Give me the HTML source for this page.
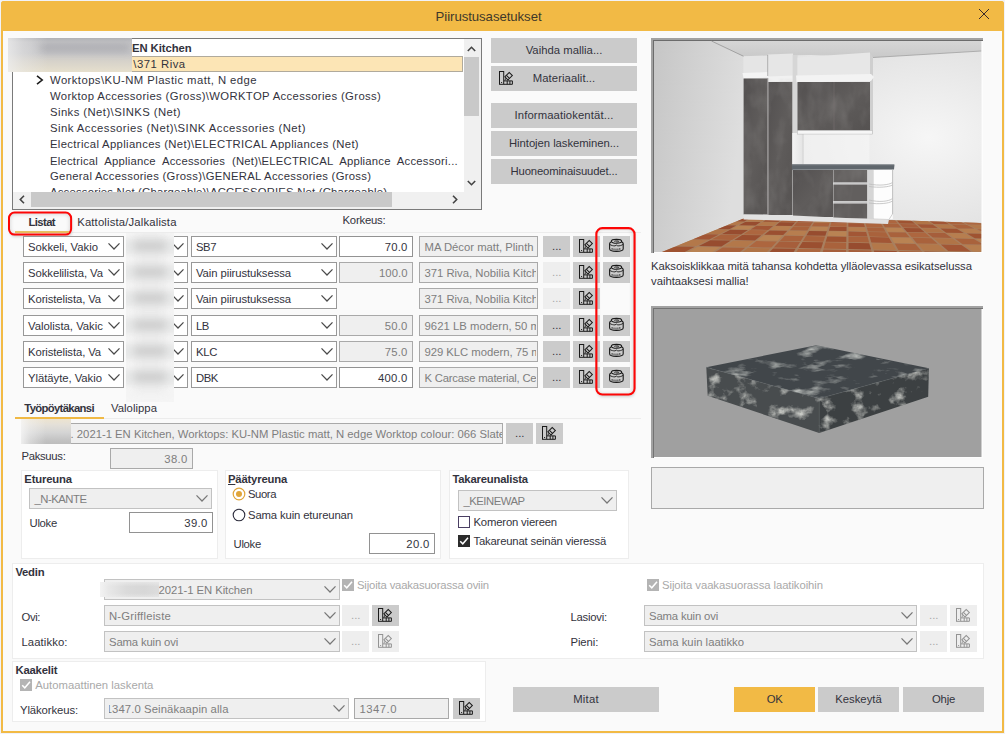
<!DOCTYPE html>
<html lang="fi">
<head>
<meta charset="utf-8">
<title>Piirustusasetukset</title>
<style>
html,body{margin:0;padding:0;}
body{width:1005px;height:734px;overflow:hidden;background:#f1f2f8;font-family:"Liberation Sans", sans-serif;position:relative;}
.a{position:absolute;box-sizing:border-box;}
.t{position:absolute;white-space:pre;}
svg{position:absolute;overflow:visible;}
</style>
</head>
<body>
<div class="a" style="left:1px;top:1px;width:1003px;height:732px;background:#fafafa;border:2px solid #f2ba45;border-radius:3px 3px 0 0;"></div>
<div class="a" style="left:1px;top:1px;width:1003px;height:30px;background:#f2ba45;border-radius:3px 3px 0 0;"></div>
<span class="t" style="top:9px;font-size:13.2px;line-height:15px;color:#40382a;left:435.6px;letter-spacing:-0.06px;">Piirustusasetukset</span>
<svg style="left:978px;top:8px" width="12" height="12" viewBox="0 0 12 12"><path d="M1 1 L11 11 M11 1 L1 11" stroke="#3a2a2a" stroke-width="1" fill="none"/></svg>
<div class="a" style="left:12px;top:38px;width:470px;height:172px;background:#ffffff;border:1px solid #7a7a7a;"></div>
<div class="a" style="left:132px;top:56px;width:331px;height:16px;background:#fce5b5;border:1px solid #b0aa9c;border-left:none;"></div>
<span class="t" style="top:42px;font-size:11.3px;line-height:12px;color:#33333d;font-weight:700;left:132px;letter-spacing:-0.07px;">EN Kitchen</span>
<span class="t" style="top:58px;font-size:11.3px;line-height:12px;color:#33333d;left:133.3px;letter-spacing:0.51px;">\371 Riva</span>
<span class="t" style="top:74px;font-size:11.3px;line-height:12px;color:#33333d;left:50px;letter-spacing:0.43px;">Worktops\KU-NM Plastic matt, N edge</span>
<span class="t" style="top:90px;font-size:11.3px;line-height:12px;color:#33333d;left:50px;letter-spacing:0.36px;">Worktop Accessories (Gross)\WORKTOP Accessories (Gross)</span>
<span class="t" style="top:106px;font-size:11.3px;line-height:12px;color:#33333d;left:50px;letter-spacing:0.43px;">Sinks (Net)\SINKS (Net)</span>
<span class="t" style="top:122px;font-size:11.3px;line-height:12px;color:#33333d;left:50px;letter-spacing:0.47px;">Sink Accessories (Net)\SINK Accessories (Net)</span>
<span class="t" style="top:138px;font-size:11.3px;line-height:12px;color:#33333d;left:50px;letter-spacing:0.34px;">Electrical Appliances (Net)\ELECTRICAL Appliances (Net)</span>
<span class="t" style="top:155px;font-size:11.3px;line-height:12px;color:#33333d;left:50px;word-spacing:3.4px;letter-spacing:0.22px;">Electrical Appliance Accessories (Net)\ELECTRICAL Appliance Accessori...</span>
<span class="t" style="top:170px;font-size:11.3px;line-height:12px;color:#33333d;left:50px;letter-spacing:0.29px;">General Accessories (Gross)\GENERAL Accessories (Gross)</span>
<div class="a" style="left:13px;top:184px;width:451px;height:8px;overflow:hidden;">
<span class="t" style="top:2px;font-size:11.3px;line-height:12px;color:#33333d;left:37px;letter-spacing:0.21px;">Accessories Net (Chargeable)\ACCESSORIES Net (Chargeable)</span>
</div>
<svg style="left:36px;top:75px" width="8" height="10" viewBox="0 0 8 10"><path d="M1 0.8 L6.2 5 L1 9.2" stroke="#1c1c1c" stroke-width="1.6" fill="none"/></svg>
<div class="a" style="left:464px;top:39px;width:17px;height:153px;background:#f0f0f0;"></div>
<div class="a" style="left:464px;top:57px;width:15px;height:58.5px;background:#c9c9c9;"></div>
<svg style="left:467px;top:46px" width="9" height="6" viewBox="0 0 9 6"><path d="M0.8 5 L4.5 1.3 L8.2 5" stroke="#444" stroke-width="1.6" fill="none"/></svg>
<svg style="left:467px;top:180px" width="9" height="6" viewBox="0 0 9 6"><path d="M0.8 1 L4.5 4.7 L8.2 1" stroke="#444" stroke-width="1.6" fill="none"/></svg>
<div class="a" style="left:13px;top:192px;width:451px;height:17px;background:#f0f0f0;"></div>
<div class="a" style="left:464px;top:192px;width:17px;height:17px;background:#f0f0f0;"></div>
<div class="a" style="left:31px;top:192px;width:361px;height:15.3px;background:#c9c9c9;"></div>
<svg style="left:19px;top:195px" width="6" height="9" viewBox="0 0 6 9"><path d="M5 0.8 L1.3 4.5 L5 8.2" stroke="#444" stroke-width="1.6" fill="none"/></svg>
<svg style="left:452px;top:195px" width="6" height="9" viewBox="0 0 6 9"><path d="M1 0.8 L4.7 4.5 L1 8.2" stroke="#444" stroke-width="1.6" fill="none"/></svg>
<div class="a" style="left:8px;top:38px;width:124px;height:34px;overflow:hidden;background:linear-gradient(180deg,#b2b3b7 0%,#c2c2c5 12%,#c6c6c8 45%,#d6d2ca 68%,#e6dfcd 100%);"><div class="a" style="left:30px;top:6px;width:92px;height:8px;border-radius:4px;background:rgba(90,90,100,0.2);filter:blur(3.5px);"></div><div class="a" style="left:0;top:0;width:124px;height:34px;background:linear-gradient(90deg,rgba(240,240,240,0.75) 0%,rgba(238,238,238,0.4) 12%,rgba(236,236,236,0) 32%);"></div></div>
<div class="a" style="left:491px;top:38px;width:146px;height:25px;background:#cbcbcb;"></div>
<span class="t" style="top:44px;font-size:11.3px;line-height:12px;color:#33333d;left:525.65px;letter-spacing:0.02px;">Vaihda mallia...</span>
<div class="a" style="left:491px;top:66px;width:146px;height:25px;background:#cbcbcb;"></div>
<span class="t" style="top:72px;font-size:11.3px;line-height:12px;color:#33333d;left:532.75px;letter-spacing:0.07px;">Materiaalit...</span>
<svg style="left:499px;top:71px;opacity:1" width="14" height="14" viewBox="0 0 14 14" fill="none" stroke="#1a1a1a" stroke-width="1"><rect x="0.5" y="0.5" width="4.2" height="12.8"/><rect x="2.1" y="11" width="1" height="1" fill="#1a1a1a" stroke="none"/><g transform="translate(9.6 5.2) rotate(-45)"><rect x="-3.1" y="-2.2" width="6.2" height="4.4"/><path d="M-0.9 -2.2 V2.2"/></g><path d="M6.6 7.4 L6 9.4" stroke-width="0.9"/><path d="M5 9.9 H13.4 V13.3 H5 M8.2 9.9 V13.3 M10.9 9.9 V13.3"/></svg>
<div class="a" style="left:491px;top:103px;width:146px;height:25px;background:#cbcbcb;"></div>
<span class="t" style="top:109px;font-size:11.3px;line-height:12px;color:#33333d;left:514.5px;letter-spacing:0.11px;">Informaatiokentät...</span>
<div class="a" style="left:491px;top:131px;width:146px;height:25px;background:#cbcbcb;"></div>
<span class="t" style="top:137px;font-size:11.3px;line-height:12px;color:#33333d;left:509.0px;letter-spacing:-0.05px;">Hintojen laskeminen...</span>
<div class="a" style="left:491px;top:159px;width:146px;height:25px;background:#cbcbcb;"></div>
<span class="t" style="top:165px;font-size:11.3px;line-height:12px;color:#33333d;left:510.5px;letter-spacing:-0.15px;">Huoneominaisuudet...</span>
<div class="a" style="left:15px;top:232px;width:626px;height:1px;background:#ececec;"></div>
<span class="t" style="top:216px;font-size:11.3px;line-height:12px;color:#33333d;font-weight:700;left:28.5px;letter-spacing:-0.61px;">Listat</span>
<span class="t" style="top:216px;font-size:11.3px;line-height:12px;color:#33333d;left:77.2px;letter-spacing:0.16px;">Kattolista/Jalkalista</span>
<span class="t" style="top:214px;font-size:11.3px;line-height:12px;color:#33333d;left:342.5px;letter-spacing:-0.2px;">Korkeus:</span>
<div class="a" style="left:9px;top:213px;width:62px;height:22px;border-radius:5.5px;box-shadow:1px 2px 3px rgba(0,0,0,0.16), inset 0 0 4px 1px rgba(0,0,0,0.17);"></div>
<svg style="left:0;top:0" width="1005" height="734" viewBox="0 0 1005 734"><rect x="9.0" y="212.6" width="62.099999999999994" height="22.0" rx="5.5" ry="5.5" fill="none" stroke="#fd0606" stroke-width="2.0"/></svg>
<div class="a" style="left:14.5px;top:231.2px;width:54px;height:1.9px;background:#e6b548;opacity:0.85;"></div>
<div class="a" style="left:23px;top:236px;width:101px;height:21px;background:#fff;border:1px solid #989898;"></div>
<div class="a" style="left:28px;top:237px;width:76px;height:19px;overflow:hidden;"></div>
<span class="t" style="top:241px;font-size:11.3px;line-height:12px;color:#33333d;left:28px;letter-spacing:-0.01px;">Sokkeli, Vakio</span>
<div class="a" style="left:104px;top:237px;width:19px;height:19px;background:#fff;"></div>
<svg style="left:107.9px;top:243.0px" width="12" height="6.8" viewBox="0 0 12 6.8"><path d="M0.5 0.4 L6.0 6.0 L11.5 0.4" stroke="#4a4a4a" stroke-width="1.25" fill="none"/></svg>
<div class="a" style="left:128px;top:236px;width:60px;height:21px;background:#fff;border:1px solid #989898;"></div>
<svg style="left:171.9px;top:243.0px" width="12" height="6.8" viewBox="0 0 12 6.8"><path d="M0.5 0.4 L6.0 6.0 L11.5 0.4" stroke="#4a4a4a" stroke-width="1.25" fill="none"/></svg>
<div class="a" style="left:191px;top:236px;width:146px;height:21px;background:#ffffff;border:1px solid #989898;"></div>
<span class="t" style="top:241px;font-size:11.3px;line-height:12px;color:#33333d;left:196px;letter-spacing:-0.45px;">SB7</span>
<svg style="left:320.9px;top:243.0px" width="12" height="6.8" viewBox="0 0 12 6.8"><path d="M0.5 0.4 L6.0 6.0 L11.5 0.4" stroke="#4a4a4a" stroke-width="1.25" fill="none"/></svg>
<div class="a" style="left:339px;top:236px;width:74px;height:21px;background:#ffffff;border:1px solid #929292;"></div>
<span class="t" style="top:241px;font-size:11.3px;line-height:12px;color:#33333d;right:597.5px;letter-spacing:0.2px;">70.0</span>
<div class="a" style="left:419px;top:236px;width:119px;height:21px;background:#efefef;border:1px solid #a9a9a9;"></div>
<div class="a" style="left:420px;top:237px;width:116.3px;height:19px;overflow:hidden;">
<span class="t" style="top:4px;font-size:11.3px;line-height:12px;color:#7e7e7e;left:4.5px;letter-spacing:-0.01px;">MA Décor matt, Plinth</span>
</div>
<div class="a" style="left:543px;top:236px;width:27px;height:21px;background:#cbcbcb;"></div>
<span class="t" style="top:240px;font-size:11.3px;line-height:12px;color:#33333d;left:552px;letter-spacing:0.03px;">...</span>
<div class="a" style="left:573px;top:236px;width:27px;height:21px;background:#cbcbcb;"></div>
<svg style="left:579px;top:239px;opacity:1" width="14" height="14" viewBox="0 0 14 14" fill="none" stroke="#1a1a1a" stroke-width="1"><rect x="0.5" y="0.5" width="4.2" height="12.8"/><rect x="2.1" y="11" width="1" height="1" fill="#1a1a1a" stroke="none"/><g transform="translate(9.6 5.2) rotate(-45)"><rect x="-3.1" y="-2.2" width="6.2" height="4.4"/><path d="M-0.9 -2.2 V2.2"/></g><path d="M6.6 7.4 L6 9.4" stroke-width="0.9"/><path d="M5 9.9 H13.4 V13.3 H5 M8.2 9.9 V13.3 M10.9 9.9 V13.3"/></svg>
<div class="a" style="left:603px;top:236px;width:27px;height:21px;background:#cbcbcb;"></div>
<svg style="left:609px;top:239px" width="15" height="13" viewBox="0 0 15 13" fill="none" stroke="#1a1a1a" stroke-width="1.1"><ellipse cx="7.5" cy="2.3" rx="5.2" ry="1.9"/><path d="M5.2 2.6 C5.4 1.6 9.6 1.6 9.8 2.4 C9.8 3.1 7.6 3.1 6.8 2.8" stroke-width="0.8"/><path d="M2.5 2.7 C1.2 3.1 0.6 3.8 0.6 4.8 V9.8 C0.6 11.3 3.6 12.4 7.4 12.4 C11.2 12.4 14.2 11.3 14.2 9.8 V4.8 C14.2 3.8 13.6 3.1 12.5 2.7"/><path d="M0.6 5.3 C2.4 6.6 4.4 6.9 6 6.9 L7.4 6.1 L8.8 6.9 C10.4 6.9 12.4 6.6 14.2 5.3" stroke-width="0.9"/><path d="M3.1 9 V10.9 M5 9.5 V11.4 M7 9.6 V11.5 M8.9 9.5 V11.4 M10.8 9 V10.9" stroke-width="0.8"/></svg>
<div class="a" style="left:23px;top:262px;width:101px;height:21px;background:#fff;border:1px solid #989898;"></div>
<div class="a" style="left:28px;top:263px;width:76px;height:19px;overflow:hidden;"></div>
<span class="t" style="top:267px;font-size:11.3px;line-height:12px;color:#33333d;left:28px;letter-spacing:-0.05px;">Sokkelilista, Va</span>
<div class="a" style="left:104px;top:263px;width:19px;height:19px;background:#fff;"></div>
<svg style="left:107.9px;top:269.0px" width="12" height="6.8" viewBox="0 0 12 6.8"><path d="M0.5 0.4 L6.0 6.0 L11.5 0.4" stroke="#4a4a4a" stroke-width="1.25" fill="none"/></svg>
<div class="a" style="left:128px;top:262px;width:60px;height:21px;background:#fff;border:1px solid #989898;"></div>
<svg style="left:171.9px;top:269.0px" width="12" height="6.8" viewBox="0 0 12 6.8"><path d="M0.5 0.4 L6.0 6.0 L11.5 0.4" stroke="#4a4a4a" stroke-width="1.25" fill="none"/></svg>
<div class="a" style="left:191px;top:262px;width:146px;height:21px;background:#ffffff;border:1px solid #989898;"></div>
<span class="t" style="top:267px;font-size:11.3px;line-height:12px;color:#33333d;left:196px;letter-spacing:-0.08px;">Vain piirustuksessa</span>
<svg style="left:320.9px;top:269.0px" width="12" height="6.8" viewBox="0 0 12 6.8"><path d="M0.5 0.4 L6.0 6.0 L11.5 0.4" stroke="#4a4a4a" stroke-width="1.25" fill="none"/></svg>
<div class="a" style="left:339px;top:262px;width:74px;height:21px;background:#efefef;border:1px solid #a9a9a9;"></div>
<span class="t" style="top:267px;font-size:11.3px;line-height:12px;color:#7e7e7e;right:597.5px;letter-spacing:0.04px;">100.0</span>
<div class="a" style="left:419px;top:262px;width:119px;height:21px;background:#efefef;border:1px solid #a9a9a9;"></div>
<div class="a" style="left:420px;top:263px;width:116.3px;height:19px;overflow:hidden;">
<span class="t" style="top:4px;font-size:11.3px;line-height:12px;color:#7e7e7e;left:4.5px;letter-spacing:-0.01px;">371 Riva, Nobilia Kitchen</span>
</div>
<div class="a" style="left:543px;top:262px;width:27px;height:21px;background:#eeeeee;"></div>
<span class="t" style="top:266px;font-size:11.3px;line-height:12px;color:#a8a8a8;left:552px;letter-spacing:0.03px;">...</span>
<div class="a" style="left:573px;top:262px;width:27px;height:21px;background:#cbcbcb;"></div>
<svg style="left:579px;top:265px;opacity:1" width="14" height="14" viewBox="0 0 14 14" fill="none" stroke="#1a1a1a" stroke-width="1"><rect x="0.5" y="0.5" width="4.2" height="12.8"/><rect x="2.1" y="11" width="1" height="1" fill="#1a1a1a" stroke="none"/><g transform="translate(9.6 5.2) rotate(-45)"><rect x="-3.1" y="-2.2" width="6.2" height="4.4"/><path d="M-0.9 -2.2 V2.2"/></g><path d="M6.6 7.4 L6 9.4" stroke-width="0.9"/><path d="M5 9.9 H13.4 V13.3 H5 M8.2 9.9 V13.3 M10.9 9.9 V13.3"/></svg>
<div class="a" style="left:603px;top:262px;width:27px;height:21px;background:#cbcbcb;"></div>
<svg style="left:609px;top:265px" width="15" height="13" viewBox="0 0 15 13" fill="none" stroke="#1a1a1a" stroke-width="1.1"><ellipse cx="7.5" cy="2.3" rx="5.2" ry="1.9"/><path d="M5.2 2.6 C5.4 1.6 9.6 1.6 9.8 2.4 C9.8 3.1 7.6 3.1 6.8 2.8" stroke-width="0.8"/><path d="M2.5 2.7 C1.2 3.1 0.6 3.8 0.6 4.8 V9.8 C0.6 11.3 3.6 12.4 7.4 12.4 C11.2 12.4 14.2 11.3 14.2 9.8 V4.8 C14.2 3.8 13.6 3.1 12.5 2.7"/><path d="M0.6 5.3 C2.4 6.6 4.4 6.9 6 6.9 L7.4 6.1 L8.8 6.9 C10.4 6.9 12.4 6.6 14.2 5.3" stroke-width="0.9"/><path d="M3.1 9 V10.9 M5 9.5 V11.4 M7 9.6 V11.5 M8.9 9.5 V11.4 M10.8 9 V10.9" stroke-width="0.8"/></svg>
<div class="a" style="left:23px;top:288px;width:101px;height:21px;background:#fff;border:1px solid #989898;"></div>
<div class="a" style="left:28px;top:289px;width:76px;height:19px;overflow:hidden;"></div>
<span class="t" style="top:293px;font-size:11.3px;line-height:12px;color:#33333d;left:28px;letter-spacing:-0.09px;">Koristelista, Va</span>
<div class="a" style="left:104px;top:289px;width:19px;height:19px;background:#fff;"></div>
<svg style="left:107.9px;top:295.0px" width="12" height="6.8" viewBox="0 0 12 6.8"><path d="M0.5 0.4 L6.0 6.0 L11.5 0.4" stroke="#4a4a4a" stroke-width="1.25" fill="none"/></svg>
<div class="a" style="left:128px;top:288px;width:60px;height:21px;background:#fff;border:1px solid #989898;"></div>
<svg style="left:171.9px;top:295.0px" width="12" height="6.8" viewBox="0 0 12 6.8"><path d="M0.5 0.4 L6.0 6.0 L11.5 0.4" stroke="#4a4a4a" stroke-width="1.25" fill="none"/></svg>
<div class="a" style="left:191px;top:288px;width:146px;height:21px;background:#ffffff;border:1px solid #989898;"></div>
<span class="t" style="top:293px;font-size:11.3px;line-height:12px;color:#33333d;left:196px;letter-spacing:-0.08px;">Vain piirustuksessa</span>
<svg style="left:320.9px;top:295.0px" width="12" height="6.8" viewBox="0 0 12 6.8"><path d="M0.5 0.4 L6.0 6.0 L11.5 0.4" stroke="#4a4a4a" stroke-width="1.25" fill="none"/></svg>
<div class="a" style="left:419px;top:288px;width:119px;height:21px;background:#efefef;border:1px solid #a9a9a9;"></div>
<div class="a" style="left:420px;top:289px;width:116.3px;height:19px;overflow:hidden;">
<span class="t" style="top:4px;font-size:11.3px;line-height:12px;color:#7e7e7e;left:4.5px;letter-spacing:-0.01px;">371 Riva, Nobilia Kitchen</span>
</div>
<div class="a" style="left:543px;top:288px;width:27px;height:21px;background:#eeeeee;"></div>
<span class="t" style="top:292px;font-size:11.3px;line-height:12px;color:#a8a8a8;left:552px;letter-spacing:0.03px;">...</span>
<div class="a" style="left:573px;top:288px;width:27px;height:21px;background:#cbcbcb;"></div>
<svg style="left:579px;top:291px;opacity:1" width="14" height="14" viewBox="0 0 14 14" fill="none" stroke="#1a1a1a" stroke-width="1"><rect x="0.5" y="0.5" width="4.2" height="12.8"/><rect x="2.1" y="11" width="1" height="1" fill="#1a1a1a" stroke="none"/><g transform="translate(9.6 5.2) rotate(-45)"><rect x="-3.1" y="-2.2" width="6.2" height="4.4"/><path d="M-0.9 -2.2 V2.2"/></g><path d="M6.6 7.4 L6 9.4" stroke-width="0.9"/><path d="M5 9.9 H13.4 V13.3 H5 M8.2 9.9 V13.3 M10.9 9.9 V13.3"/></svg>
<div class="a" style="left:23px;top:315px;width:101px;height:21px;background:#fff;border:1px solid #989898;"></div>
<div class="a" style="left:28px;top:316px;width:76px;height:19px;overflow:hidden;"></div>
<span class="t" style="top:320px;font-size:11.3px;line-height:12px;color:#33333d;left:28px;">Valolista, Vakic</span>
<div class="a" style="left:104px;top:316px;width:19px;height:19px;background:#fff;"></div>
<svg style="left:107.9px;top:322.0px" width="12" height="6.8" viewBox="0 0 12 6.8"><path d="M0.5 0.4 L6.0 6.0 L11.5 0.4" stroke="#4a4a4a" stroke-width="1.25" fill="none"/></svg>
<div class="a" style="left:128px;top:315px;width:60px;height:21px;background:#fff;border:1px solid #989898;"></div>
<svg style="left:171.9px;top:322.0px" width="12" height="6.8" viewBox="0 0 12 6.8"><path d="M0.5 0.4 L6.0 6.0 L11.5 0.4" stroke="#4a4a4a" stroke-width="1.25" fill="none"/></svg>
<div class="a" style="left:191px;top:315px;width:146px;height:21px;background:#ffffff;border:1px solid #989898;"></div>
<span class="t" style="top:320px;font-size:11.3px;line-height:12px;color:#33333d;left:196px;letter-spacing:-0.41px;">LB</span>
<svg style="left:320.9px;top:322.0px" width="12" height="6.8" viewBox="0 0 12 6.8"><path d="M0.5 0.4 L6.0 6.0 L11.5 0.4" stroke="#4a4a4a" stroke-width="1.25" fill="none"/></svg>
<div class="a" style="left:339px;top:315px;width:74px;height:21px;background:#efefef;border:1px solid #a9a9a9;"></div>
<span class="t" style="top:320px;font-size:11.3px;line-height:12px;color:#7e7e7e;right:597.5px;letter-spacing:0.2px;">50.0</span>
<div class="a" style="left:419px;top:315px;width:119px;height:21px;background:#efefef;border:1px solid #a9a9a9;"></div>
<div class="a" style="left:420px;top:316px;width:116.3px;height:19px;overflow:hidden;">
<span class="t" style="top:4px;font-size:11.3px;line-height:12px;color:#7e7e7e;left:4.5px;letter-spacing:0.03px;">9621 LB modern, 50 mm</span>
</div>
<div class="a" style="left:543px;top:315px;width:27px;height:21px;background:#cbcbcb;"></div>
<span class="t" style="top:319px;font-size:11.3px;line-height:12px;color:#33333d;left:552px;letter-spacing:0.03px;">...</span>
<div class="a" style="left:573px;top:315px;width:27px;height:21px;background:#cbcbcb;"></div>
<svg style="left:579px;top:318px;opacity:1" width="14" height="14" viewBox="0 0 14 14" fill="none" stroke="#1a1a1a" stroke-width="1"><rect x="0.5" y="0.5" width="4.2" height="12.8"/><rect x="2.1" y="11" width="1" height="1" fill="#1a1a1a" stroke="none"/><g transform="translate(9.6 5.2) rotate(-45)"><rect x="-3.1" y="-2.2" width="6.2" height="4.4"/><path d="M-0.9 -2.2 V2.2"/></g><path d="M6.6 7.4 L6 9.4" stroke-width="0.9"/><path d="M5 9.9 H13.4 V13.3 H5 M8.2 9.9 V13.3 M10.9 9.9 V13.3"/></svg>
<div class="a" style="left:603px;top:315px;width:27px;height:21px;background:#cbcbcb;"></div>
<svg style="left:609px;top:318px" width="15" height="13" viewBox="0 0 15 13" fill="none" stroke="#1a1a1a" stroke-width="1.1"><ellipse cx="7.5" cy="2.3" rx="5.2" ry="1.9"/><path d="M5.2 2.6 C5.4 1.6 9.6 1.6 9.8 2.4 C9.8 3.1 7.6 3.1 6.8 2.8" stroke-width="0.8"/><path d="M2.5 2.7 C1.2 3.1 0.6 3.8 0.6 4.8 V9.8 C0.6 11.3 3.6 12.4 7.4 12.4 C11.2 12.4 14.2 11.3 14.2 9.8 V4.8 C14.2 3.8 13.6 3.1 12.5 2.7"/><path d="M0.6 5.3 C2.4 6.6 4.4 6.9 6 6.9 L7.4 6.1 L8.8 6.9 C10.4 6.9 12.4 6.6 14.2 5.3" stroke-width="0.9"/><path d="M3.1 9 V10.9 M5 9.5 V11.4 M7 9.6 V11.5 M8.9 9.5 V11.4 M10.8 9 V10.9" stroke-width="0.8"/></svg>
<div class="a" style="left:23px;top:341px;width:101px;height:21px;background:#fff;border:1px solid #989898;"></div>
<div class="a" style="left:28px;top:342px;width:76px;height:19px;overflow:hidden;"></div>
<span class="t" style="top:346px;font-size:11.3px;line-height:12px;color:#33333d;left:28px;letter-spacing:-0.09px;">Koristelista, Va</span>
<div class="a" style="left:104px;top:342px;width:19px;height:19px;background:#fff;"></div>
<svg style="left:107.9px;top:348.0px" width="12" height="6.8" viewBox="0 0 12 6.8"><path d="M0.5 0.4 L6.0 6.0 L11.5 0.4" stroke="#4a4a4a" stroke-width="1.25" fill="none"/></svg>
<div class="a" style="left:128px;top:341px;width:60px;height:21px;background:#fff;border:1px solid #989898;"></div>
<svg style="left:171.9px;top:348.0px" width="12" height="6.8" viewBox="0 0 12 6.8"><path d="M0.5 0.4 L6.0 6.0 L11.5 0.4" stroke="#4a4a4a" stroke-width="1.25" fill="none"/></svg>
<div class="a" style="left:191px;top:341px;width:146px;height:21px;background:#ffffff;border:1px solid #989898;"></div>
<span class="t" style="top:346px;font-size:11.3px;line-height:12px;color:#33333d;left:196px;letter-spacing:-0.33px;">KLC</span>
<svg style="left:320.9px;top:348.0px" width="12" height="6.8" viewBox="0 0 12 6.8"><path d="M0.5 0.4 L6.0 6.0 L11.5 0.4" stroke="#4a4a4a" stroke-width="1.25" fill="none"/></svg>
<div class="a" style="left:339px;top:341px;width:74px;height:21px;background:#efefef;border:1px solid #a9a9a9;"></div>
<span class="t" style="top:346px;font-size:11.3px;line-height:12px;color:#7e7e7e;right:597.5px;letter-spacing:0.2px;">75.0</span>
<div class="a" style="left:419px;top:341px;width:119px;height:21px;background:#efefef;border:1px solid #a9a9a9;"></div>
<div class="a" style="left:420px;top:342px;width:116.3px;height:19px;overflow:hidden;">
<span class="t" style="top:4px;font-size:11.3px;line-height:12px;color:#7e7e7e;left:4.5px;letter-spacing:-0.03px;">929 KLC modern, 75 mm</span>
</div>
<div class="a" style="left:543px;top:341px;width:27px;height:21px;background:#cbcbcb;"></div>
<span class="t" style="top:345px;font-size:11.3px;line-height:12px;color:#33333d;left:552px;letter-spacing:0.03px;">...</span>
<div class="a" style="left:573px;top:341px;width:27px;height:21px;background:#cbcbcb;"></div>
<svg style="left:579px;top:344px;opacity:1" width="14" height="14" viewBox="0 0 14 14" fill="none" stroke="#1a1a1a" stroke-width="1"><rect x="0.5" y="0.5" width="4.2" height="12.8"/><rect x="2.1" y="11" width="1" height="1" fill="#1a1a1a" stroke="none"/><g transform="translate(9.6 5.2) rotate(-45)"><rect x="-3.1" y="-2.2" width="6.2" height="4.4"/><path d="M-0.9 -2.2 V2.2"/></g><path d="M6.6 7.4 L6 9.4" stroke-width="0.9"/><path d="M5 9.9 H13.4 V13.3 H5 M8.2 9.9 V13.3 M10.9 9.9 V13.3"/></svg>
<div class="a" style="left:603px;top:341px;width:27px;height:21px;background:#cbcbcb;"></div>
<svg style="left:609px;top:344px" width="15" height="13" viewBox="0 0 15 13" fill="none" stroke="#1a1a1a" stroke-width="1.1"><ellipse cx="7.5" cy="2.3" rx="5.2" ry="1.9"/><path d="M5.2 2.6 C5.4 1.6 9.6 1.6 9.8 2.4 C9.8 3.1 7.6 3.1 6.8 2.8" stroke-width="0.8"/><path d="M2.5 2.7 C1.2 3.1 0.6 3.8 0.6 4.8 V9.8 C0.6 11.3 3.6 12.4 7.4 12.4 C11.2 12.4 14.2 11.3 14.2 9.8 V4.8 C14.2 3.8 13.6 3.1 12.5 2.7"/><path d="M0.6 5.3 C2.4 6.6 4.4 6.9 6 6.9 L7.4 6.1 L8.8 6.9 C10.4 6.9 12.4 6.6 14.2 5.3" stroke-width="0.9"/><path d="M3.1 9 V10.9 M5 9.5 V11.4 M7 9.6 V11.5 M8.9 9.5 V11.4 M10.8 9 V10.9" stroke-width="0.8"/></svg>
<div class="a" style="left:23px;top:367px;width:101px;height:21px;background:#fff;border:1px solid #989898;"></div>
<div class="a" style="left:28px;top:368px;width:76px;height:19px;overflow:hidden;"></div>
<span class="t" style="top:372px;font-size:11.3px;line-height:12px;color:#33333d;left:28px;letter-spacing:-0.04px;">Ylätäyte, Vakio</span>
<div class="a" style="left:104px;top:368px;width:19px;height:19px;background:#fff;"></div>
<svg style="left:107.9px;top:374.0px" width="12" height="6.8" viewBox="0 0 12 6.8"><path d="M0.5 0.4 L6.0 6.0 L11.5 0.4" stroke="#4a4a4a" stroke-width="1.25" fill="none"/></svg>
<div class="a" style="left:128px;top:367px;width:60px;height:21px;background:#fff;border:1px solid #989898;"></div>
<svg style="left:171.9px;top:374.0px" width="12" height="6.8" viewBox="0 0 12 6.8"><path d="M0.5 0.4 L6.0 6.0 L11.5 0.4" stroke="#4a4a4a" stroke-width="1.25" fill="none"/></svg>
<div class="a" style="left:191px;top:367px;width:146px;height:21px;background:#ffffff;border:1px solid #989898;"></div>
<span class="t" style="top:372px;font-size:11.3px;line-height:12px;color:#33333d;left:196px;letter-spacing:-0.41px;">DBK</span>
<svg style="left:320.9px;top:374.0px" width="12" height="6.8" viewBox="0 0 12 6.8"><path d="M0.5 0.4 L6.0 6.0 L11.5 0.4" stroke="#4a4a4a" stroke-width="1.25" fill="none"/></svg>
<div class="a" style="left:339px;top:367px;width:74px;height:21px;background:#ffffff;border:1px solid #929292;"></div>
<span class="t" style="top:372px;font-size:11.3px;line-height:12px;color:#33333d;right:597.5px;letter-spacing:0.26px;">400.0</span>
<div class="a" style="left:419px;top:367px;width:119px;height:21px;background:#efefef;border:1px solid #a9a9a9;"></div>
<div class="a" style="left:420px;top:368px;width:116.3px;height:19px;overflow:hidden;">
<span class="t" style="top:4px;font-size:11.3px;line-height:12px;color:#7e7e7e;left:4.5px;letter-spacing:-0.22px;">K Carcase material, Cen</span>
</div>
<div class="a" style="left:543px;top:367px;width:27px;height:21px;background:#cbcbcb;"></div>
<span class="t" style="top:371px;font-size:11.3px;line-height:12px;color:#33333d;left:552px;letter-spacing:0.03px;">...</span>
<div class="a" style="left:573px;top:367px;width:27px;height:21px;background:#cbcbcb;"></div>
<svg style="left:579px;top:370px;opacity:1" width="14" height="14" viewBox="0 0 14 14" fill="none" stroke="#1a1a1a" stroke-width="1"><rect x="0.5" y="0.5" width="4.2" height="12.8"/><rect x="2.1" y="11" width="1" height="1" fill="#1a1a1a" stroke="none"/><g transform="translate(9.6 5.2) rotate(-45)"><rect x="-3.1" y="-2.2" width="6.2" height="4.4"/><path d="M-0.9 -2.2 V2.2"/></g><path d="M6.6 7.4 L6 9.4" stroke-width="0.9"/><path d="M5 9.9 H13.4 V13.3 H5 M8.2 9.9 V13.3 M10.9 9.9 V13.3"/></svg>
<div class="a" style="left:603px;top:367px;width:27px;height:21px;background:#cbcbcb;"></div>
<svg style="left:609px;top:370px" width="15" height="13" viewBox="0 0 15 13" fill="none" stroke="#1a1a1a" stroke-width="1.1"><ellipse cx="7.5" cy="2.3" rx="5.2" ry="1.9"/><path d="M5.2 2.6 C5.4 1.6 9.6 1.6 9.8 2.4 C9.8 3.1 7.6 3.1 6.8 2.8" stroke-width="0.8"/><path d="M2.5 2.7 C1.2 3.1 0.6 3.8 0.6 4.8 V9.8 C0.6 11.3 3.6 12.4 7.4 12.4 C11.2 12.4 14.2 11.3 14.2 9.8 V4.8 C14.2 3.8 13.6 3.1 12.5 2.7"/><path d="M0.6 5.3 C2.4 6.6 4.4 6.9 6 6.9 L7.4 6.1 L8.8 6.9 C10.4 6.9 12.4 6.6 14.2 5.3" stroke-width="0.9"/><path d="M3.1 9 V10.9 M5 9.5 V11.4 M7 9.6 V11.5 M8.9 9.5 V11.4 M10.8 9 V10.9" stroke-width="0.8"/></svg>
<div class="a" style="left:126px;top:233px;width:48px;height:169px;overflow:hidden;"><div class="a" style="left:0;top:0;width:48px;height:170px;background:#f5f5f5;"></div><div class="a" style="left:8px;top:0px;width:32px;height:160px;background:#ededed;filter:blur(5px);"></div><div class="a" style="left:-4px;top:6px;width:56px;height:15px;background:#e9eaea;filter:blur(2px);"></div><div class="a" style="left:7px;top:8px;width:34px;height:10px;border-radius:5px;background:#cccccc;filter:blur(4px);"></div><div class="a" style="left:-4px;top:32px;width:56px;height:15px;background:#e9eaea;filter:blur(2px);"></div><div class="a" style="left:7px;top:34px;width:34px;height:10px;border-radius:5px;background:#cccccc;filter:blur(4px);"></div><div class="a" style="left:-4px;top:58px;width:56px;height:15px;background:#e9eaea;filter:blur(2px);"></div><div class="a" style="left:7px;top:60px;width:34px;height:10px;border-radius:5px;background:#cccccc;filter:blur(4px);"></div><div class="a" style="left:-4px;top:85px;width:56px;height:15px;background:#e9eaea;filter:blur(2px);"></div><div class="a" style="left:7px;top:87px;width:34px;height:10px;border-radius:5px;background:#cccccc;filter:blur(4px);"></div><div class="a" style="left:-4px;top:111px;width:56px;height:15px;background:#e9eaea;filter:blur(2px);"></div><div class="a" style="left:7px;top:113px;width:34px;height:10px;border-radius:5px;background:#cccccc;filter:blur(4px);"></div><div class="a" style="left:-4px;top:137px;width:56px;height:15px;background:#e9eaea;filter:blur(2px);"></div><div class="a" style="left:7px;top:139px;width:34px;height:10px;border-radius:5px;background:#cccccc;filter:blur(4px);"></div></div>
<div class="a" style="left:596px;top:228px;width:38px;height:167px;border-radius:6px;box-shadow:1px 2px 3px rgba(0,0,0,0.16), inset 0 0 4px 1px rgba(0,0,0,0.17);"></div>
<svg style="left:0;top:0" width="1005" height="734" viewBox="0 0 1005 734"><rect x="596.3499999999999" y="228.15" width="38.20000000000007" height="166.40000000000003" rx="5.95" ry="5.95" fill="none" stroke="#fd0606" stroke-width="2.1"/></svg>
<div class="a" style="left:15px;top:418px;width:626px;height:1px;background:#ececec;"></div>
<div class="a" style="left:14.5px;top:417.2px;width:89.5px;height:1.9px;background:#f0b945;"></div>
<span class="t" style="top:402px;font-size:11.3px;line-height:12px;color:#33333d;font-weight:700;left:24.3px;letter-spacing:-0.67px;">Työpöytäkansi</span>
<span class="t" style="top:402px;font-size:11.3px;line-height:12px;color:#33333d;left:111px;letter-spacing:0.04px;">Valolippa</span>
<div class="a" style="left:21px;top:423px;width:482px;height:21px;background:#efefef;border:1px solid #a9a9a9;"></div>
<div class="a" style="left:22px;top:424px;width:479.5px;height:19px;overflow:hidden;">
<span class="t" style="top:4px;font-size:11.3px;line-height:12px;color:#7e7e7e;left:48.6px;letter-spacing:-0.01px;">. 2021-1 EN Kitchen, Worktops: KU-NM Plastic matt, N edge Worktop colour: 066 Slate grey</span>
</div>
<div class="a" style="left:21px;top:419px;width:50px;height:25px;overflow:hidden;background:linear-gradient(180deg,#ede4cf 0%,#e4e0d8 22%,#d4d4d4 55%,#c2c2c2 85%,#bcbcbc 100%);"><div class="a" style="left:0;top:0;width:50px;height:25px;background:linear-gradient(90deg,rgba(246,246,246,0.85) 0%,rgba(244,244,244,0.45) 18%,rgba(240,240,240,0) 50%);"></div></div>
<div class="a" style="left:506px;top:423px;width:27px;height:21px;background:#cbcbcb;"></div>
<span class="t" style="top:427px;font-size:11.3px;line-height:12px;color:#33333d;left:515px;letter-spacing:0.03px;">...</span>
<div class="a" style="left:536px;top:423px;width:27px;height:21px;background:#cbcbcb;"></div>
<svg style="left:542px;top:426px;opacity:1" width="14" height="14" viewBox="0 0 14 14" fill="none" stroke="#1a1a1a" stroke-width="1"><rect x="0.5" y="0.5" width="4.2" height="12.8"/><rect x="2.1" y="11" width="1" height="1" fill="#1a1a1a" stroke="none"/><g transform="translate(9.6 5.2) rotate(-45)"><rect x="-3.1" y="-2.2" width="6.2" height="4.4"/><path d="M-0.9 -2.2 V2.2"/></g><path d="M6.6 7.4 L6 9.4" stroke-width="0.9"/><path d="M5 9.9 H13.4 V13.3 H5 M8.2 9.9 V13.3 M10.9 9.9 V13.3"/></svg>
<span class="t" style="top:450px;font-size:11.3px;line-height:12px;color:#33333d;left:21.5px;letter-spacing:-0.31px;">Paksuus:</span>
<div class="a" style="left:110px;top:448px;width:83px;height:21px;background:#efefef;border:1px solid #a9a9a9;"></div>
<span class="t" style="top:453px;font-size:11.3px;line-height:12px;color:#7e7e7e;right:817.5px;letter-spacing:0.3px;">38.0</span>
<div class="a" style="left:21px;top:470px;width:197px;height:89px;background:#ffffff;border:1px solid #ededed;"></div>
<span class="t" style="top:473px;font-size:11.3px;line-height:12px;color:#33333d;font-weight:700;left:24.3px;letter-spacing:-0.18px;">Etureuna</span>
<div class="a" style="left:29px;top:488px;width:183px;height:21px;background:#efefef;border:1px solid #c2c2c2;"></div>
<span class="t" style="top:493px;font-size:11.3px;line-height:12px;color:#7e7e7e;left:34.5px;letter-spacing:-0.48px;">_N-KANTE</span>
<svg style="left:195.9px;top:495.0px" width="12" height="6.8" viewBox="0 0 12 6.8"><path d="M0.5 0.4 L6.0 6.0 L11.5 0.4" stroke="#777" stroke-width="1.25" fill="none"/></svg>
<span class="t" style="top:517px;font-size:11.3px;line-height:12px;color:#33333d;left:29.5px;letter-spacing:-0.28px;">Uloke</span>
<div class="a" style="left:129px;top:512px;width:84px;height:21px;background:#ffffff;border:1px solid #929292;"></div>
<span class="t" style="top:517px;font-size:11.3px;line-height:12px;color:#33333d;right:797.5px;letter-spacing:0.3px;">39.0</span>
<div class="a" style="left:225px;top:470px;width:216px;height:89px;background:#ffffff;border:1px solid #ededed;"></div>
<span class="t" style="top:473px;font-size:11.3px;line-height:12px;color:#33333d;font-weight:700;left:228px;letter-spacing:-0.19px;"><span style="text-decoration:underline">P</span>äätyreuna</span>
<svg style="left:232px;top:487px" width="14" height="14" viewBox="0 0 14 14"><circle cx="7" cy="7" r="5.8" fill="#fff" stroke="#e0a53a" stroke-width="1.2"/><circle cx="7" cy="7" r="3" fill="#e0a53a"/></svg>
<span class="t" style="top:488px;font-size:11.3px;line-height:12px;color:#33333d;left:248px;letter-spacing:-0.43px;">Suora</span>
<svg style="left:232px;top:508px" width="14" height="14" viewBox="0 0 14 14"><circle cx="7" cy="7" r="5.8" fill="#fff" stroke="#2b2b3b" stroke-width="1.1"/></svg>
<span class="t" style="top:509px;font-size:11.3px;line-height:12px;color:#33333d;left:248px;letter-spacing:-0.13px;">Sama kuin etureunan</span>
<span class="t" style="top:538px;font-size:11.3px;line-height:12px;color:#33333d;left:233.5px;letter-spacing:-0.28px;">Uloke</span>
<div class="a" style="left:369px;top:533px;width:66px;height:21px;background:#ffffff;border:1px solid #929292;"></div>
<span class="t" style="top:538px;font-size:11.3px;line-height:12px;color:#33333d;right:575.5px;letter-spacing:0.3px;">20.0</span>
<div class="a" style="left:449px;top:470px;width:180px;height:89px;background:#ffffff;border:1px solid #ededed;"></div>
<span class="t" style="top:473px;font-size:11.3px;line-height:12px;color:#33333d;font-weight:700;left:452.4px;letter-spacing:-0.2px;">Takareunalista</span>
<div class="a" style="left:458px;top:490px;width:159px;height:21px;background:#efefef;border:1px solid #c2c2c2;"></div>
<span class="t" style="top:495px;font-size:11.3px;line-height:12px;color:#7e7e7e;left:463.5px;letter-spacing:-0.5px;">_KEINEWAP</span>
<svg style="left:600.9px;top:497.0px" width="12" height="6.8" viewBox="0 0 12 6.8"><path d="M0.5 0.4 L6.0 6.0 L11.5 0.4" stroke="#777" stroke-width="1.25" fill="none"/></svg>
<div class="a" style="left:458px;top:516px;width:12px;height:12px;background:#ffffff;border:1px solid #4a3f63;"></div>
<span class="t" style="top:516px;font-size:11.3px;line-height:12px;color:#33333d;left:473.5px;letter-spacing:-0.17px;">Komeron viereen</span>
<div class="a" style="left:458px;top:535px;width:12px;height:12px;background:#2b2b2b;"></div>
<svg style="left:458px;top:535px" width="12" height="12" viewBox="0 0 12 12"><path d="M2.2 6.2 L4.8 8.8 L10 2.8" stroke="#fff" stroke-width="1.5" fill="none"/></svg>
<span class="t" style="top:535px;font-size:11.3px;line-height:12px;color:#33333d;left:473.5px;letter-spacing:-0.19px;">Takareunat seinän vieressä</span>
<div class="a" style="left:12px;top:563px;width:972px;height:96px;background:#ffffff;border:1px solid #ededed;"></div>
<span class="t" style="top:566px;font-size:11.3px;line-height:12px;color:#33333d;font-weight:700;left:15.4px;letter-spacing:-0.23px;">Vedin</span>
<div class="a" style="left:104px;top:579px;width:236px;height:21px;background:#efefef;border:1px solid #c2c2c2;"></div>
<svg style="left:323.9px;top:586.0px" width="12" height="6.8" viewBox="0 0 12 6.8"><path d="M0.5 0.4 L6.0 6.0 L11.5 0.4" stroke="#777" stroke-width="1.25" fill="none"/></svg>
<span class="t" style="top:584px;font-size:11.3px;line-height:12px;color:#7e7e7e;left:158.5px;letter-spacing:-0.05px;">2021-1 EN Kitchen</span>
<div class="a" style="left:100px;top:582px;width:59px;height:15px;overflow:hidden;background:linear-gradient(90deg,#f3f3f3 0%,#e8e8e8 14%,#dadada 45%,#d7d7d7 75%,#dcdcdc 100%);"><div class="a" style="left:0;top:0;width:59px;height:15px;background:linear-gradient(180deg,rgba(240,240,240,0.55) 0%,rgba(240,240,240,0) 30%,rgba(240,240,240,0) 75%,rgba(240,240,240,0.45) 100%);"></div></div>
<div class="a" style="left:342px;top:579px;width:12px;height:12px;background:#b4b4b4;"></div>
<svg style="left:342px;top:579px" width="12" height="12" viewBox="0 0 12 12"><path d="M2.2 6.2 L4.8 8.8 L10 2.8" stroke="#fff" stroke-width="1.5" fill="none"/></svg>
<span class="t" style="top:579px;font-size:11.3px;line-height:12px;color:#a9a9a9;left:357px;letter-spacing:-0.16px;">Sijoita vaakasuorassa oviin</span>
<div class="a" style="left:647px;top:579px;width:12px;height:12px;background:#b4b4b4;"></div>
<svg style="left:647px;top:579px" width="12" height="12" viewBox="0 0 12 12"><path d="M2.2 6.2 L4.8 8.8 L10 2.8" stroke="#fff" stroke-width="1.5" fill="none"/></svg>
<span class="t" style="top:579px;font-size:11.3px;line-height:12px;color:#a9a9a9;left:662px;letter-spacing:-0.07px;">Sijoita vaakasuorassa laatikoihin</span>
<span class="t" style="top:611px;font-size:11.3px;line-height:12px;color:#33333d;left:21.5px;letter-spacing:-0.4px;">Ovi:</span>
<div class="a" style="left:104px;top:605px;width:236px;height:21px;background:#efefef;border:1px solid #c2c2c2;"></div>
<span class="t" style="top:610px;font-size:11.3px;line-height:12px;color:#7e7e7e;left:109px;letter-spacing:0.2px;">N-Griffleiste</span>
<svg style="left:323.9px;top:612.0px" width="12" height="6.8" viewBox="0 0 12 6.8"><path d="M0.5 0.4 L6.0 6.0 L11.5 0.4" stroke="#777" stroke-width="1.25" fill="none"/></svg>
<div class="a" style="left:342px;top:605px;width:27px;height:21px;background:#eeeeee;"></div>
<span class="t" style="top:609px;font-size:11.3px;line-height:12px;color:#a8a8a8;left:351px;letter-spacing:0.03px;">...</span>
<div class="a" style="left:372px;top:605px;width:27px;height:21px;background:#cbcbcb;"></div>
<svg style="left:378px;top:608px;opacity:1" width="14" height="14" viewBox="0 0 14 14" fill="none" stroke="#1a1a1a" stroke-width="1"><rect x="0.5" y="0.5" width="4.2" height="12.8"/><rect x="2.1" y="11" width="1" height="1" fill="#1a1a1a" stroke="none"/><g transform="translate(9.6 5.2) rotate(-45)"><rect x="-3.1" y="-2.2" width="6.2" height="4.4"/><path d="M-0.9 -2.2 V2.2"/></g><path d="M6.6 7.4 L6 9.4" stroke-width="0.9"/><path d="M5 9.9 H13.4 V13.3 H5 M8.2 9.9 V13.3 M10.9 9.9 V13.3"/></svg>
<span class="t" style="top:636px;font-size:11.3px;line-height:12px;color:#33333d;left:21.5px;letter-spacing:0.09px;">Laatikko:</span>
<div class="a" style="left:104px;top:631px;width:236px;height:21px;background:#efefef;border:1px solid #c2c2c2;"></div>
<span class="t" style="top:636px;font-size:11.3px;line-height:12px;color:#7e7e7e;left:109px;letter-spacing:-0.15px;">Sama kuin ovi</span>
<svg style="left:323.9px;top:638.0px" width="12" height="6.8" viewBox="0 0 12 6.8"><path d="M0.5 0.4 L6.0 6.0 L11.5 0.4" stroke="#777" stroke-width="1.25" fill="none"/></svg>
<div class="a" style="left:342px;top:631px;width:27px;height:21px;background:#eeeeee;"></div>
<span class="t" style="top:635px;font-size:11.3px;line-height:12px;color:#a8a8a8;left:351px;letter-spacing:0.03px;">...</span>
<div class="a" style="left:372px;top:631px;width:27px;height:21px;background:#eeeeee;"></div>
<svg style="left:378px;top:634px;opacity:1" width="14" height="14" viewBox="0 0 14 14" fill="none" stroke="#939393" stroke-width="1"><rect x="0.5" y="0.5" width="4.2" height="12.8"/><rect x="2.1" y="11" width="1" height="1" fill="#939393" stroke="none"/><g transform="translate(9.6 5.2) rotate(-45)"><rect x="-3.1" y="-2.2" width="6.2" height="4.4"/><path d="M-0.9 -2.2 V2.2"/></g><path d="M6.6 7.4 L6 9.4" stroke-width="0.9"/><path d="M5 9.9 H13.4 V13.3 H5 M8.2 9.9 V13.3 M10.9 9.9 V13.3"/></svg>
<span class="t" style="top:611px;font-size:11.3px;line-height:12px;color:#33333d;left:570.4px;letter-spacing:-0.23px;">Lasiovi:</span>
<div class="a" style="left:644px;top:605px;width:273px;height:21px;background:#efefef;border:1px solid #c2c2c2;"></div>
<span class="t" style="top:610px;font-size:11.3px;line-height:12px;color:#7e7e7e;left:649px;letter-spacing:-0.15px;">Sama kuin ovi</span>
<svg style="left:900.9px;top:612.0px" width="12" height="6.8" viewBox="0 0 12 6.8"><path d="M0.5 0.4 L6.0 6.0 L11.5 0.4" stroke="#777" stroke-width="1.25" fill="none"/></svg>
<div class="a" style="left:920px;top:605px;width:27px;height:21px;background:#eeeeee;"></div>
<span class="t" style="top:609px;font-size:11.3px;line-height:12px;color:#a8a8a8;left:929px;letter-spacing:0.03px;">...</span>
<div class="a" style="left:950px;top:605px;width:27px;height:21px;background:#eeeeee;"></div>
<svg style="left:956px;top:608px;opacity:1" width="14" height="14" viewBox="0 0 14 14" fill="none" stroke="#939393" stroke-width="1"><rect x="0.5" y="0.5" width="4.2" height="12.8"/><rect x="2.1" y="11" width="1" height="1" fill="#939393" stroke="none"/><g transform="translate(9.6 5.2) rotate(-45)"><rect x="-3.1" y="-2.2" width="6.2" height="4.4"/><path d="M-0.9 -2.2 V2.2"/></g><path d="M6.6 7.4 L6 9.4" stroke-width="0.9"/><path d="M5 9.9 H13.4 V13.3 H5 M8.2 9.9 V13.3 M10.9 9.9 V13.3"/></svg>
<span class="t" style="top:636px;font-size:11.3px;line-height:12px;color:#33333d;left:570.4px;letter-spacing:-0.04px;">Pieni:</span>
<div class="a" style="left:644px;top:631px;width:273px;height:21px;background:#efefef;border:1px solid #c2c2c2;"></div>
<span class="t" style="top:636px;font-size:11.3px;line-height:12px;color:#7e7e7e;left:649px;letter-spacing:0.01px;">Sama kuin laatikko</span>
<svg style="left:900.9px;top:638.0px" width="12" height="6.8" viewBox="0 0 12 6.8"><path d="M0.5 0.4 L6.0 6.0 L11.5 0.4" stroke="#777" stroke-width="1.25" fill="none"/></svg>
<div class="a" style="left:920px;top:631px;width:27px;height:21px;background:#eeeeee;"></div>
<span class="t" style="top:635px;font-size:11.3px;line-height:12px;color:#a8a8a8;left:929px;letter-spacing:0.03px;">...</span>
<div class="a" style="left:950px;top:631px;width:27px;height:21px;background:#eeeeee;"></div>
<svg style="left:956px;top:634px;opacity:1" width="14" height="14" viewBox="0 0 14 14" fill="none" stroke="#939393" stroke-width="1"><rect x="0.5" y="0.5" width="4.2" height="12.8"/><rect x="2.1" y="11" width="1" height="1" fill="#939393" stroke="none"/><g transform="translate(9.6 5.2) rotate(-45)"><rect x="-3.1" y="-2.2" width="6.2" height="4.4"/><path d="M-0.9 -2.2 V2.2"/></g><path d="M6.6 7.4 L6 9.4" stroke-width="0.9"/><path d="M5 9.9 H13.4 V13.3 H5 M8.2 9.9 V13.3 M10.9 9.9 V13.3"/></svg>
<div class="a" style="left:12px;top:661px;width:474px;height:61px;background:#ffffff;border:1px solid #ededed;"></div>
<span class="t" style="top:664px;font-size:11.3px;line-height:12px;color:#33333d;font-weight:700;left:15.4px;letter-spacing:-0.17px;">Kaakelit</span>
<div class="a" style="left:20px;top:679px;width:12px;height:12px;background:#b4b4b4;"></div>
<svg style="left:20px;top:679px" width="12" height="12" viewBox="0 0 12 12"><path d="M2.2 6.2 L4.8 8.8 L10 2.8" stroke="#fff" stroke-width="1.5" fill="none"/></svg>
<span class="t" style="top:679px;font-size:11.3px;line-height:12px;color:#a9a9a9;left:35.3px;">Automaattinen laskenta</span>
<span class="t" style="top:704px;font-size:11.3px;line-height:12px;color:#33333d;left:20px;letter-spacing:-0.09px;">Yläkorkeus:</span>
<div class="a" style="left:104px;top:698px;width:245px;height:21px;background:#efefef;border:1px solid #c2c2c2;"></div>
<svg style="left:332.9px;top:705.0px" width="12" height="6.8" viewBox="0 0 12 6.8"><path d="M0.5 0.4 L6.0 6.0 L11.5 0.4" stroke="#777" stroke-width="1.25" fill="none"/></svg>
<div class="a" style="left:109.3px;top:699px;width:220px;height:19px;overflow:hidden;">
<span class="t" style="top:4px;font-size:11.3px;line-height:12px;color:#7e7e7e;left:-3.6px;letter-spacing:0.1px;">1347.0 Seinäkaapin alla</span>
</div>
<div class="a" style="left:354px;top:698px;width:95px;height:21px;background:#efefef;border:1px solid #a9a9a9;"></div>
<span class="t" style="top:703px;font-size:11.3px;line-height:12px;color:#7e7e7e;left:359.5px;letter-spacing:0.49px;">1347.0</span>
<div class="a" style="left:453px;top:698px;width:27px;height:21px;background:#cbcbcb;"></div>
<svg style="left:459px;top:701px;opacity:1" width="14" height="14" viewBox="0 0 14 14" fill="none" stroke="#1a1a1a" stroke-width="1"><rect x="0.5" y="0.5" width="4.2" height="12.8"/><rect x="2.1" y="11" width="1" height="1" fill="#1a1a1a" stroke="none"/><g transform="translate(9.6 5.2) rotate(-45)"><rect x="-3.1" y="-2.2" width="6.2" height="4.4"/><path d="M-0.9 -2.2 V2.2"/></g><path d="M6.6 7.4 L6 9.4" stroke-width="0.9"/><path d="M5 9.9 H13.4 V13.3 H5 M8.2 9.9 V13.3 M10.9 9.9 V13.3"/></svg>
<div class="a" style="left:513px;top:687px;width:146px;height:25px;background:#cbcbcb;"></div>
<span class="t" style="top:693px;font-size:11.3px;line-height:12px;color:#33333d;left:573.25px;letter-spacing:0.2px;">Mitat</span>
<div class="a" style="left:734px;top:687px;width:81px;height:25px;background:#f2ba45;"></div>
<span class="t" style="top:693px;font-size:11.3px;line-height:12px;color:#33333d;left:766.75px;letter-spacing:-0.41px;">OK</span>
<div class="a" style="left:818px;top:687px;width:81px;height:25px;background:#cbcbcb;"></div>
<span class="t" style="top:693px;font-size:11.3px;line-height:12px;color:#33333d;left:835.25px;">Keskeytä</span>
<div class="a" style="left:903px;top:687px;width:81px;height:25px;background:#cbcbcb;"></div>
<span class="t" style="top:693px;font-size:11.3px;line-height:12px;color:#33333d;left:932.0px;letter-spacing:-0.22px;">Ohje</span>
<svg style="left:651px;top:38px" width="332" height="215" viewBox="0 0 332 215">
<defs>
<linearGradient id="lw" x1="0" y1="0" x2="1" y2="0.3"><stop offset="0" stop-color="#c6c6c6"/><stop offset="1" stop-color="#dedede"/></linearGradient>
<linearGradient id="cl" x1="0" y1="0" x2="0" y2="1"><stop offset="0" stop-color="#d6d6d6"/><stop offset="1" stop-color="#c9c9c9"/></linearGradient>
<radialGradient id="bw" cx="0.78" cy="0.5" r="0.55"><stop offset="0" stop-color="#f6f6f6"/><stop offset="1" stop-color="#e3e3e3"/></radialGradient>
<linearGradient id="dk" x1="0" y1="0" x2="1" y2="1"><stop offset="0" stop-color="#535050"/><stop offset="0.5" stop-color="#5f5c5b"/><stop offset="1" stop-color="#555251"/></linearGradient>
<linearGradient id="wp2" x1="0" y1="0" x2="1" y2="0"><stop offset="0" stop-color="#f4f4f4"/><stop offset="0.8" stop-color="#e6e6e6"/><stop offset="1" stop-color="#cfcfcf"/></linearGradient>
<linearGradient id="wp" x1="0" y1="0" x2="1" y2="0"><stop offset="0" stop-color="#d8d8d8"/><stop offset="1" stop-color="#f6f6f6"/></linearGradient>
<pattern id="tiles" width="26" height="26" patternUnits="userSpaceOnUse" patternTransform="matrix(1.1 0.12 -1.5 0.5 100 182)">
<rect width="26" height="26" fill="#bb9068"/>
<rect x="0.5" y="0.5" width="12.2" height="12.2" fill="#ab6540"/>
<rect x="13.5" y="0.5" width="12.2" height="12.2" fill="#b8794b"/>
<rect x="0.5" y="13.5" width="12.2" height="12.2" fill="#bf8856"/>
<rect x="13.5" y="13.5" width="12.2" height="12.2" fill="#9a4e32"/>
</pattern>
<filter id="nz" x="0" y="0" width="100%" height="100%"><feTurbulence type="fractalNoise" baseFrequency="0.07 0.035" numOctaves="3" seed="4" result="n"/><feColorMatrix in="n" type="matrix" values="0 0 0 0 0.46  0 0 0 0 0.45  0 0 0 0 0.44  1.1 1.1 0 0 -0.95"/><feComposite in2="SourceGraphic" operator="in"/></filter>
</defs>
<rect x="0" y="0" width="332" height="215" fill="#a2a2a2"/>
<rect x="2" y="2" width="330" height="213" fill="#6c6c6c"/>
<rect x="3" y="3" width="328" height="211" fill="#e6e6e6"/>
<!-- back wall -->
<polygon points="92,18 222,19 330.5,13 330.5,186 92,181" fill="url(#bw)"/>
<!-- ceiling -->
<polygon points="3,3 330.5,3 330.5,13 222,19.5 160,17 92.5,18.5 60.5,3" fill="url(#cl)"/>
<!-- left wall -->
<polygon points="3,3 60.5,3 92.6,18.3 92.6,180.5 11,214 3,214" fill="url(#lw)"/>
<path d="M60.5 3 L92.6 18.3" stroke="#8a8a8a" stroke-width="0.7" fill="none"/>
<path d="M222 19.5 L330.5 13" stroke="#9a9a9a" stroke-width="0.7" fill="none"/>
<!-- floor -->
<clipPath id="flc"><polygon points="92.6,180.5 240,182 330.5,185 330.5,214 11,214"/></clipPath>
<g clip-path="url(#flc)">
<rect x="0" y="175" width="332" height="40" fill="#b08a68"/>
<polygon points="-22.3,214.7 2.5,215.3 18.7,208.3 -3.9,207.9" fill="#c48e5a"/>
<polygon points="5.2,215.3 30.0,215.9 43.9,208.8 21.3,208.4" fill="#a65733"/>
<polygon points="32.7,215.9 57.5,216.5 69.1,209.3 46.5,208.9" fill="#c48e5a"/>
<polygon points="60.2,216.5 85.0,217.1 94.3,209.8 71.7,209.4" fill="#b2683f"/>
<polygon points="87.6,217.1 112.5,217.7 119.4,210.3 96.9,209.9" fill="#ba7d4c"/>
<polygon points="115.1,217.7 140.0,218.3 144.6,210.8 122.1,210.4" fill="#a15231"/>
<polygon points="142.6,218.3 167.5,218.9 169.8,211.3 147.3,210.9" fill="#b66d43"/>
<polygon points="170.1,219.0 194.9,219.5 195.0,211.9 172.5,211.4" fill="#ae643e"/>
<polygon points="197.6,219.6 222.4,220.1 220.2,212.4 197.6,211.9" fill="#ae643e"/>
<polygon points="225.1,220.2 249.9,220.7 245.4,212.9 222.8,212.4" fill="#a15231"/>
<polygon points="252.5,220.8 277.4,221.3 270.6,213.4 248.0,212.9" fill="#b2683f"/>
<polygon points="280.0,221.4 304.9,221.9 295.8,213.9 273.2,213.4" fill="#a65733"/>
<polygon points="307.5,222.0 332.4,222.5 320.9,214.4 298.4,213.9" fill="#ae643e"/>
<polygon points="335.0,222.6 359.9,223.1 346.1,214.9 323.6,214.4" fill="#a95a37"/>
<polygon points="-27.1,206.6 -4.5,207.1 10.8,201.3 -9.8,201.0" fill="#c28955"/>
<polygon points="-2.1,207.1 20.4,207.6 33.9,201.8 13.2,201.4" fill="#9c4e30"/>
<polygon points="22.8,207.6 45.4,208.1 56.9,202.2 36.3,201.8" fill="#bd8250"/>
<polygon points="47.8,208.1 70.4,208.6 79.9,202.6 59.3,202.2" fill="#9c4e30"/>
<polygon points="72.8,208.6 95.3,209.1 103.0,203.0 82.3,202.7" fill="#bd8250"/>
<polygon points="97.7,209.1 120.3,209.6 126.0,203.5 105.4,203.1" fill="#b66d43"/>
<polygon points="122.7,209.6 145.2,210.1 149.1,203.9 128.4,203.5" fill="#ae643e"/>
<polygon points="147.6,210.1 170.2,210.6 172.1,204.3 151.5,203.9" fill="#a15231"/>
<polygon points="172.6,210.6 195.1,211.1 195.2,204.7 174.5,204.3" fill="#b2683f"/>
<polygon points="197.5,211.1 220.1,211.6 218.2,205.2 197.6,204.8" fill="#9c4e30"/>
<polygon points="222.5,211.6 245.0,212.1 241.3,205.6 220.6,205.2" fill="#bd8250"/>
<polygon points="247.4,212.1 270.0,212.6 264.3,206.0 243.7,205.6" fill="#b2683f"/>
<polygon points="272.4,212.6 294.9,213.1 287.4,206.4 266.7,206.0" fill="#bd8250"/>
<polygon points="297.3,213.1 319.9,213.6 310.4,206.9 289.8,206.5" fill="#a95a37"/>
<polygon points="322.3,213.6 344.9,214.1 333.5,207.3 312.8,206.9" fill="#c28955"/>
<polygon points="-8.2,200.4 12.5,200.7 25.4,195.8 6.4,195.5" fill="#b66d43"/>
<polygon points="14.7,200.8 35.3,201.2 46.6,196.2 27.6,195.9" fill="#ba7d4c"/>
<polygon points="37.5,201.2 58.2,201.6 67.9,196.6 48.8,196.2" fill="#a95a37"/>
<polygon points="60.4,201.6 81.0,202.0 89.1,196.9 70.1,196.6" fill="#b2683f"/>
<polygon points="83.2,202.0 103.9,202.4 110.4,197.3 91.3,197.0" fill="#a15231"/>
<polygon points="106.1,202.4 126.7,202.8 131.6,197.6 112.6,197.3" fill="#c48e5a"/>
<polygon points="128.9,202.9 149.6,203.2 152.8,198.0 133.8,197.7" fill="#b2683f"/>
<polygon points="151.8,203.3 172.4,203.7 174.1,198.4 155.0,198.0" fill="#b2683f"/>
<polygon points="174.6,203.7 195.3,204.1 195.3,198.7 176.3,198.4" fill="#a65733"/>
<polygon points="197.5,204.1 218.1,204.5 216.6,199.1 197.5,198.8" fill="#b2683f"/>
<polygon points="220.3,204.5 241.0,204.9 237.8,199.4 218.8,199.1" fill="#a95a37"/>
<polygon points="243.2,205.0 263.8,205.3 259.0,199.8 240.0,199.5" fill="#c48e5a"/>
<polygon points="266.0,205.4 286.7,205.7 280.3,200.2 261.3,199.8" fill="#b2683f"/>
<polygon points="288.9,205.8 309.5,206.2 301.5,200.5 282.5,200.2" fill="#ba7d4c"/>
<polygon points="311.7,206.2 332.4,206.6 322.8,200.9 303.7,200.6" fill="#b2683f"/>
<polygon points="334.6,206.6 355.2,207.0 344.0,201.2 325.0,200.9" fill="#c48e5a"/>
<polygon points="-13.3,194.7 5.7,195.0 18.2,190.8 0.5,190.5" fill="#ae643e"/>
<polygon points="7.8,195.0 26.8,195.3 37.9,191.1 20.2,190.8" fill="#b2683f"/>
<polygon points="28.9,195.4 47.9,195.7 57.6,191.4 39.9,191.1" fill="#a65733"/>
<polygon points="49.9,195.7 69.0,196.0 77.3,191.7 59.6,191.4" fill="#ba7d4c"/>
<polygon points="71.0,196.1 90.0,196.4 97.0,192.0 79.3,191.8" fill="#9c4e30"/>
<polygon points="92.1,196.4 111.1,196.7 116.7,192.3 99.0,192.1" fill="#b66d43"/>
<polygon points="113.2,196.8 132.2,197.1 136.4,192.7 118.7,192.4" fill="#a15231"/>
<polygon points="134.2,197.1 153.3,197.5 156.1,193.0 138.4,192.7" fill="#c28955"/>
<polygon points="155.3,197.5 174.3,197.8 175.8,193.3 158.1,193.0" fill="#9c4e30"/>
<polygon points="176.4,197.8 195.4,198.2 195.5,193.6 177.8,193.3" fill="#c48e5a"/>
<polygon points="197.5,198.2 216.5,198.5 215.1,193.9 197.5,193.6" fill="#a95a37"/>
<polygon points="218.5,198.6 237.6,198.9 234.8,194.2 217.2,193.9" fill="#b2683f"/>
<polygon points="239.6,198.9 258.6,199.2 254.5,194.5 236.9,194.2" fill="#b2683f"/>
<polygon points="260.7,199.3 279.7,199.6 274.2,194.8 256.6,194.5" fill="#b66d43"/>
<polygon points="281.8,199.6 300.8,199.9 293.9,195.1 276.3,194.9" fill="#ae643e"/>
<polygon points="302.8,200.0 321.9,200.3 313.6,195.4 296.0,195.2" fill="#c28955"/>
<polygon points="323.9,200.3 342.9,200.7 333.3,195.8 315.7,195.5" fill="#a65733"/>
<polygon points="-17.7,189.8 -0.0,190.1 11.9,186.4 -4.5,186.2" fill="#b66d43"/>
<polygon points="1.9,190.1 19.5,190.4 30.3,186.7 13.8,186.5" fill="#ae643e"/>
<polygon points="21.4,190.4 39.1,190.7 48.6,187.0 32.2,186.7" fill="#a15231"/>
<polygon points="41.0,190.7 58.6,191.0 67.0,187.3 50.5,187.0" fill="#bd8250"/>
<polygon points="60.5,191.0 78.2,191.3 85.4,187.5 68.9,187.3" fill="#9c4e30"/>
<polygon points="80.1,191.3 97.7,191.6 103.7,187.8 87.3,187.6" fill="#c48e5a"/>
<polygon points="99.6,191.6 117.3,191.9 122.1,188.1 105.6,187.8" fill="#a95a37"/>
<polygon points="119.2,191.9 136.9,192.2 140.5,188.3 124.0,188.1" fill="#c28955"/>
<polygon points="138.8,192.2 156.4,192.5 158.8,188.6 142.4,188.4" fill="#b2683f"/>
<polygon points="158.3,192.5 176.0,192.8 177.2,188.9 160.7,188.6" fill="#c48e5a"/>
<polygon points="177.9,192.8 195.5,193.1 195.6,189.1 179.1,188.9" fill="#a15231"/>
<polygon points="197.4,193.1 215.1,193.4 213.9,189.4 197.5,189.2" fill="#c28955"/>
<polygon points="217.0,193.4 234.6,193.7 232.3,189.7 215.8,189.4" fill="#b2683f"/>
<polygon points="236.5,193.7 254.2,194.0 250.6,190.0 234.2,189.7" fill="#c48e5a"/>
<polygon points="256.1,194.1 273.7,194.3 269.0,190.2 252.5,190.0" fill="#a15231"/>
<polygon points="275.6,194.4 293.3,194.6 287.4,190.5 270.9,190.2" fill="#ba7d4c"/>
<polygon points="295.2,194.7 312.9,194.9 305.7,190.8 289.3,190.5" fill="#a65733"/>
<polygon points="314.8,195.0 332.4,195.2 324.1,191.0 307.6,190.8" fill="#c28955"/>
<polygon points="334.3,195.3 352.0,195.6 342.5,191.3 326.0,191.1" fill="#b66d43"/>
<polygon points="-21.5,185.6 -5.0,185.8 6.5,182.7 -9.0,182.5" fill="#ae643e"/>
<polygon points="-3.2,185.8 13.2,186.1 23.7,182.9 8.2,182.7" fill="#c28955"/>
<polygon points="15.0,186.1 31.5,186.3 40.9,183.1 25.4,182.9" fill="#a15231"/>
<polygon points="33.2,186.4 49.7,186.6 58.1,183.4 42.6,183.2" fill="#ba7d4c"/>
<polygon points="51.5,186.6 67.9,186.9 75.3,183.6 59.8,183.4" fill="#b2683f"/>
<polygon points="69.7,186.9 86.2,187.1 92.5,183.8 77.0,183.6" fill="#bd8250"/>
<polygon points="88.0,187.2 104.4,187.4 109.7,184.1 94.2,183.9" fill="#9c4e30"/>
<polygon points="106.2,187.4 122.7,187.7 126.9,184.3 111.4,184.1" fill="#bd8250"/>
<polygon points="124.4,187.7 140.9,187.9 144.1,184.6 128.6,184.3" fill="#9c4e30"/>
<polygon points="142.7,188.0 159.1,188.2 161.3,184.8 145.8,184.6" fill="#ae643e"/>
<polygon points="160.9,188.2 177.4,188.5 178.5,185.0 163.0,184.8" fill="#b2683f"/>
<polygon points="179.2,188.5 195.6,188.7 195.7,185.3 180.2,185.1" fill="#b66d43"/>
<polygon points="197.4,188.8 213.9,189.0 212.8,185.5 197.4,185.3" fill="#a95a37"/>
<polygon points="215.6,189.0 232.1,189.3 230.0,185.7 214.6,185.5" fill="#b66d43"/>
<polygon points="233.9,189.3 250.3,189.5 247.2,186.0 231.8,185.8" fill="#b2683f"/>
<polygon points="252.1,189.6 268.6,189.8 264.4,186.2 249.0,186.0" fill="#ae643e"/>
<polygon points="270.4,189.8 286.8,190.1 281.6,186.4 266.2,186.2" fill="#a95a37"/>
<polygon points="288.6,190.1 305.1,190.3 298.8,186.7 283.4,186.5" fill="#bd8250"/>
<polygon points="306.8,190.4 323.3,190.6 316.0,186.9 300.6,186.7" fill="#b2683f"/>
<polygon points="325.1,190.6 341.5,190.9 333.2,187.2 317.8,186.9" fill="#bd8250"/>
<polygon points="-7.7,182.1 7.7,182.3 17.8,179.6 3.3,179.4" fill="#b66d43"/>
<polygon points="9.4,182.4 24.8,182.6 34.0,179.8 19.5,179.6" fill="#b66d43"/>
<polygon points="26.5,182.6 41.9,182.8 50.2,180.0 35.7,179.8" fill="#ae643e"/>
<polygon points="43.6,182.8 59.0,183.0 66.3,180.2 51.8,180.0" fill="#a95a37"/>
<polygon points="60.7,183.1 76.1,183.3 82.5,180.4 68.0,180.2" fill="#bd8250"/>
<polygon points="77.7,183.3 93.2,183.5 98.7,180.6 84.2,180.4" fill="#a15231"/>
<polygon points="94.8,183.5 110.3,183.7 114.9,180.8 100.4,180.6" fill="#bd8250"/>
<polygon points="111.9,183.8 127.3,184.0 131.0,181.0 116.5,180.8" fill="#a65733"/>
<polygon points="129.0,184.0 144.4,184.2 147.2,181.2 132.7,181.0" fill="#b2683f"/>
<polygon points="146.1,184.2 161.5,184.4 163.4,181.4 148.9,181.2" fill="#a95a37"/>
<polygon points="163.2,184.5 178.6,184.7 179.6,181.6 165.1,181.5" fill="#bd8250"/>
<polygon points="180.3,184.7 195.7,184.9 195.7,181.8 181.2,181.7" fill="#a65733"/>
<polygon points="197.4,184.9 212.8,185.1 211.9,182.1 197.4,181.9" fill="#b2683f"/>
<polygon points="214.5,185.2 229.9,185.4 228.1,182.3 213.6,182.1" fill="#9c4e30"/>
<polygon points="231.6,185.4 247.0,185.6 244.3,182.5 229.7,182.3" fill="#b66d43"/>
<polygon points="248.6,185.6 264.1,185.8 260.4,182.7 245.9,182.5" fill="#a65733"/>
<polygon points="265.7,185.9 281.2,186.1 276.6,182.9 262.1,182.7" fill="#ba7d4c"/>
<polygon points="282.8,186.1 298.2,186.3 292.8,183.1 278.3,182.9" fill="#a95a37"/>
<polygon points="299.9,186.3 315.3,186.5 308.9,183.3 294.4,183.1" fill="#b2683f"/>
<polygon points="317.0,186.6 332.4,186.8 325.1,183.5 310.6,183.3" fill="#b66d43"/>
<polygon points="334.1,186.8 349.5,187.0 341.3,183.7 326.8,183.5" fill="#ba7d4c"/>
<polygon points="-11.6,178.9 2.9,179.1 12.7,176.6 -1.0,176.4" fill="#c28955"/>
<polygon points="4.4,179.1 18.9,179.3 27.9,176.8 14.2,176.6" fill="#a15231"/>
<polygon points="20.5,179.3 35.0,179.5 43.2,177.0 29.5,176.8" fill="#b66d43"/>
<polygon points="36.6,179.5 51.1,179.7 58.4,177.1 44.7,177.0" fill="#b2683f"/>
<polygon points="52.7,179.7 67.2,179.9 73.7,177.3 60.0,177.2" fill="#ba7d4c"/>
<polygon points="68.7,179.9 83.2,180.1 89.0,177.5 75.3,177.3" fill="#b66d43"/>
<polygon points="84.8,180.1 99.3,180.3 104.2,177.7 90.5,177.5" fill="#c48e5a"/>
<polygon points="100.9,180.3 115.4,180.5 119.5,177.9 105.8,177.7" fill="#ae643e"/>
<polygon points="117.0,180.5 131.5,180.7 134.8,178.1 121.1,177.9" fill="#ae643e"/>
<polygon points="133.0,180.7 147.6,180.9 150.0,178.3 136.3,178.1" fill="#a15231"/>
<polygon points="149.1,180.9 163.6,181.1 165.3,178.4 151.6,178.3" fill="#b66d43"/>
<polygon points="165.2,181.1 179.7,181.3 180.5,178.6 166.8,178.5" fill="#b2683f"/>
<polygon points="181.3,181.3 195.8,181.5 195.8,178.8 182.1,178.7" fill="#b66d43"/>
<polygon points="197.4,181.6 211.9,181.7 211.1,179.0 197.4,178.8" fill="#9c4e30"/>
<polygon points="213.4,181.8 227.9,181.9 226.3,179.2 212.6,179.0" fill="#ae643e"/>
<polygon points="229.5,182.0 244.0,182.2 241.6,179.4 227.9,179.2" fill="#a65733"/>
<polygon points="245.6,182.2 260.1,182.4 256.9,179.6 243.2,179.4" fill="#c28955"/>
<polygon points="261.7,182.4 276.2,182.6 272.1,179.8 258.4,179.6" fill="#9c4e30"/>
<polygon points="277.7,182.6 292.2,182.8 287.4,179.9 273.7,179.8" fill="#c28955"/>
<polygon points="293.8,182.8 308.3,183.0 302.6,180.1 288.9,180.0" fill="#ae643e"/>
<polygon points="309.9,183.0 324.4,183.2 317.9,180.3 304.2,180.1" fill="#bd8250"/>
<polygon points="326.0,183.2 340.5,183.4 333.2,180.5 319.5,180.3" fill="#ae643e"/>
<polygon points="75.9,177.1 89.6,177.2 94.7,174.9 81.8,174.8" fill="#b66d43"/>
<polygon points="91.1,177.3 104.8,177.4 109.2,175.1 96.2,175.0" fill="#ae643e"/>
<polygon points="106.3,177.4 120.0,177.6 123.6,175.3 110.7,175.1" fill="#c48e5a"/>
<polygon points="121.4,177.6 135.1,177.8 138.1,175.4 125.1,175.3" fill="#a15231"/>
<polygon points="136.6,177.8 150.3,178.0 152.5,175.6 139.6,175.5" fill="#ae643e"/>
<polygon points="151.8,178.0 165.5,178.2 167.0,175.8 154.0,175.6" fill="#b2683f"/>
<polygon points="167.0,178.2 180.7,178.4 181.4,175.9 168.5,175.8" fill="#ba7d4c"/>
<polygon points="182.2,178.4 195.9,178.5 195.9,176.1 182.9,176.0" fill="#a65733"/>
<polygon points="197.3,178.6 211.0,178.7 210.3,176.3 197.4,176.1" fill="#c28955"/>
<polygon points="212.5,178.7 226.2,178.9 224.8,176.4 211.8,176.3" fill="#a95a37"/>
<polygon points="227.7,178.9 241.4,179.1 239.2,176.6 226.3,176.5" fill="#c48e5a"/>
<polygon points="242.9,179.1 256.6,179.3 253.7,176.8 240.7,176.6" fill="#a15231"/>
<polygon points="258.0,179.3 271.7,179.5 268.1,176.9 255.1,176.8" fill="#ba7d4c"/>
<polygon points="273.2,179.5 286.9,179.6 282.6,177.1 269.6,177.0" fill="#a65733"/>
<polygon points="288.4,179.7 302.1,179.8 297.0,177.3 284.0,177.1" fill="#bd8250"/>
<polygon points="303.6,179.8 317.3,180.0 311.5,177.4 298.5,177.3" fill="#a95a37"/>
<polygon points="318.7,180.0 332.4,180.2 325.9,177.6 312.9,177.5" fill="#b66d43"/>
<polygon points="333.9,180.2 347.6,180.4 340.4,177.8 327.4,177.6" fill="#9c4e30"/>
<polygon points="312.3,177.2 325.3,177.3 319.4,175.0 307.1,174.9" fill="#a15231"/>
<polygon points="326.7,177.4 339.6,177.5 333.1,175.2 320.8,175.0" fill="#bd8250"/>
<polygon points="341.0,177.5 354.0,177.7 346.8,175.3 334.5,175.2" fill="#9c4e30"/>
<rect x="0" y="175" width="332" height="40" fill="#7a3e28" opacity="0.14"/>
</g>
<!-- tall cabinet tops -->
<polygon points="92.6,18.3 116.5,17.5 116.5,35 92.6,36" fill="#e5e5e5"/>
<polygon points="117,16.5 142,15.5 142,38 117,39" fill="#e6e6e6"/>
<polygon points="91.5,35 117,34 117,39.5 92.6,40.5" fill="#f4f4f4"/>
<polygon points="116.5,38.5 143,37.5 143,43 117,44" fill="#f1f1f1"/>
<path d="M116.7 17 V38" stroke="#9a9a9a" stroke-width="0.7"/>
<!-- tall cabinet doors -->
<rect x="92.6" y="40.5" width="24" height="136" fill="url(#dk)"/>
<rect x="117.3" y="44" width="24.2" height="133" fill="url(#dk)"/>
<rect x="92.6" y="40.5" width="49" height="136.5" fill="#8d8a89" filter="url(#nz)" opacity="0.26"/>
<path d="M116.8 40 V177" stroke="#8f8c8b" stroke-width="0.8"/>
<!-- white strip / panel -->
<rect x="141.6" y="17" width="5" height="110" fill="#d6d6d6"/>
<rect x="141.3" y="95" width="11.5" height="31.5" fill="url(#wp2)"/>
<!-- wall cabinet -->
<polygon points="146.5,19.5 219,14.5 219,37 146.5,38.5" fill="#e7e7e7"/>
<polygon points="219,14.5 222,19.5 222,96 219,96" fill="#cfcfcf"/>
<polygon points="145,37.5 220,36 223,39 220,43 145.5,44.5" fill="#f3f3f3"/>
<rect x="146.5" y="44" width="72.5" height="48.5" fill="url(#dk)"/>
<rect x="146.5" y="44" width="72.5" height="48.5" fill="#8d8a89" filter="url(#nz)" opacity="0.26"/>
<path d="M183 44 V92" stroke="#75716f" stroke-width="0.6"/>
<rect x="146.5" y="92.5" width="75" height="3.6" fill="#f6f6f6" stroke="#b5b5b5" stroke-width="0.5"/>
<!-- splashback -->
<rect x="152.5" y="96.5" width="66" height="30" fill="#f7f7f7" opacity="0.6"/>
<!-- worktop -->
<polygon points="141,126.3 243.5,126.5 243,131.5 141,131.8" fill="#5f666c"/>
<path d="M141 126.8 H243" stroke="#878d92" stroke-width="0.8"/>
<!-- base cabinets -->
<rect x="142" y="132" width="40" height="47" fill="url(#dk)"/>
<rect x="182.4" y="132" width="34" height="12.5" fill="#646160"/>
<rect x="182.4" y="146.5" width="34" height="16.5" fill="#625f5e"/>
<rect x="182.4" y="165.5" width="34" height="15" fill="#605d5c"/>
<rect x="182.4" y="144.6" width="34" height="1.4" fill="#c9c9c9"/>
<rect x="182.4" y="163.2" width="34" height="1.8" fill="#c6c6c6"/>
<rect x="142" y="132" width="74" height="48" fill="#8d8a89" filter="url(#nz)" opacity="0.24"/>
<rect x="216.3" y="132" width="6.5" height="49" fill="#d6d6d6"/>
<rect x="222.8" y="132" width="19" height="49" fill="#fdfdfd"/>
<path d="M241.6 132 V176" stroke="#b0b0b0" stroke-width="0.8"/>
<path d="M218 146 C228 148 238 147 241.5 144.5 M218 148.5 C228 150 238 149 241.5 147" stroke="#bdbdbd" stroke-width="0.8" fill="none"/>
<path d="M218 162 C228 164.5 238 163.5 241.5 160.5 M218 165 C228 166.5 238 165.5 241.5 163" stroke="#bdbdbd" stroke-width="0.8" fill="none"/>
<path d="M222 181 L238 181.5 L241.5 176" stroke="#c5c5c5" stroke-width="0.8" fill="none"/>
<!-- plinth -->
<polygon points="92.6,176.5 142,177.5 216,181 238,181.5 237,186 180,184 92.6,181.5" fill="#e2e2e2"/>
<!-- frame edges -->
<rect x="330.5" y="3" width="1.5" height="212" fill="#fdfdfd"/>
<rect x="3" y="214" width="329" height="1" fill="#fdfdfd"/>
</svg>

<span class="t" style="top:260px;font-size:11.3px;line-height:12px;color:#33333d;left:651px;letter-spacing:-0.05px;">Kaksoisklikkaa mitä tahansa kohdetta ylläolevassa esikatselussa</span>
<span class="t" style="top:275px;font-size:11.3px;line-height:12px;color:#33333d;left:651px;letter-spacing:-0.02px;">vaihtaaksesi mallia!</span>
<svg style="left:651px;top:306px" width="332" height="152" viewBox="0 0 332 152">
<defs>
<filter id="mb" x="0" y="0" width="100%" height="100%"><feTurbulence type="fractalNoise" baseFrequency="0.04 0.11" numOctaves="4" seed="11" result="n"/><feColorMatrix in="n" type="matrix" values="0 0 0 0 0.52  0 0 0 0 0.54  0 0 0 0 0.52  2.4 1.4 0 0 -1.98"/><feComposite in2="SourceGraphic" operator="in"/></filter>
<filter id="mb2" x="0" y="0" width="100%" height="100%"><feTurbulence type="fractalNoise" baseFrequency="0.07 0.08" numOctaves="4" seed="5" result="n"/><feColorMatrix in="n" type="matrix" values="0 0 0 0 0.58  0 0 0 0 0.59  0 0 0 0 0.56  2.4 1.5 0 0 -2.02"/><feComposite in2="SourceGraphic" operator="in"/></filter>
</defs>
<rect x="0" y="0" width="332" height="152" fill="#a2a2a2"/>
<rect x="2" y="2" width="330" height="150" fill="#737373"/>
<rect x="3" y="3" width="328" height="148" fill="#a0a0a0"/>
<polygon points="55.3,61.2 165.4,39.3 277.9,62.3 168.2,92.6" fill="#41464a"/>
<polygon points="55.3,61.2 168.2,92.6 168.2,127 56.7,89.8" fill="#484c4e"/>
<polygon points="168.2,92.6 277.9,62.3 277.2,90.8 168.2,127" fill="#3c4042"/>
<polygon points="55.3,61.2 165.4,39.3 277.9,62.3 168.2,92.6" fill="#fff" filter="url(#mb)"/>
<polygon points="55.3,61.2 168.2,92.6 277.9,62.3 277.2,90.8 168.2,127 56.7,89.8" fill="#fff" filter="url(#mb2)"/>
<path d="M55.3 61.2 L168.2 92.6 L277.9 62.3 M168.2 92.6 V127" stroke="#6b7275" stroke-width="0.5" fill="none" opacity="0.6"/>
<rect x="330.5" y="3" width="1.5" height="149" fill="#fdfdfd"/>
<rect x="3" y="151" width="329" height="1" fill="#fdfdfd"/>
</svg>

<div class="a" style="left:651px;top:467px;width:333px;height:42px;background:#efefef;border:1px solid #a9a9a9;"></div>
</body>
</html>
